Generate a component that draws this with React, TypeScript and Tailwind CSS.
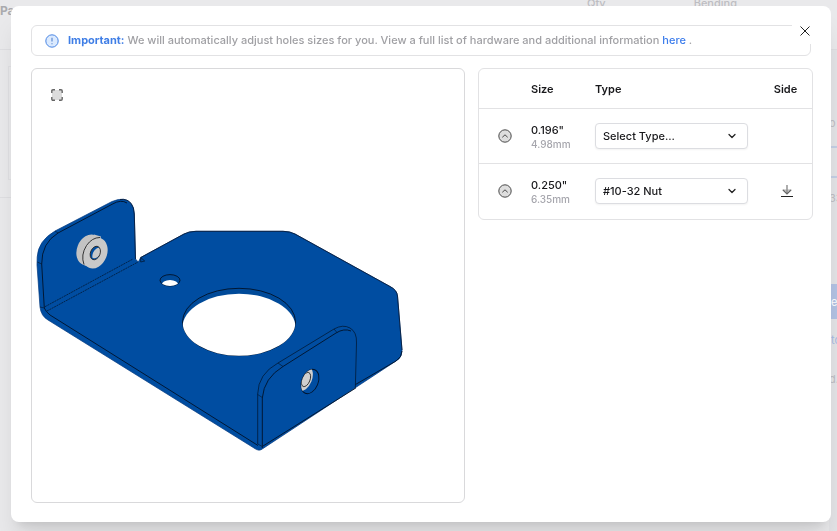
import { useState } from "react";
import { ChevronDown } from "lucide-react";

type HoleRow = {
  id: string;
  inches: string;
  mm: string;
  hardware: string;
  hasSide: boolean;
};

const HOLES: HoleRow[] = [
  { id: "h1", inches: '0.196"', mm: "4.98mm", hardware: "Select Type...", hasSide: false },
  { id: "h2", inches: '0.250"', mm: "6.35mm", hardware: "#10-32 Nut", hasSide: true },
];

function InfoIcon() {
  return (
    <svg viewBox="0 0 14 14" className="size-3.5 shrink-0" fill="none">
      <circle cx="7" cy="7" r="6.2" fill="#dbeafe" stroke="#4a86e4" />
      <path d="M7 3.8v3.8M7 9.3v1" stroke="#6f97d8" strokeWidth="1.4" />
    </svg>
  );
}

function ExpandIcon() {
  return (
    <svg viewBox="0 0 12 12" className="size-3" fill="none">
      <rect x="1" y="1" width="10" height="10" rx="1" fill="#dcdcdc" />
      <path
        d="M.8 4V2Q.8.8 2 .8h2M8 .8h2Q11.2.8 11.2 2v2M11.2 8v2q0 1.2-1.2 1.2H8M4 11.2H2Q.8 11.2.8 10V8"
        stroke="#666"
        strokeWidth="1.4"
      />
    </svg>
  );
}

function CircleUpIcon() {
  return (
    <svg viewBox="0 0 14 14" className="size-3.5" fill="none">
      <circle cx="7" cy="7" r="6.2" fill="#dedede" stroke="#4b4b4b" />
      <path d="M4.3 8.3 7 5.8l2.7 2.5" stroke="#4b4b4b" />
    </svg>
  );
}

function SideIcon() {
  return (
    <svg viewBox="0 0 14 14" className="size-3.5" fill="none">
      <path d="M3 6h8L7 10Z" fill="#d4d4d4" />
      <path d="M7 1v9" stroke="#777" strokeWidth="1.2" />
      <path d="M2.5 6h9" stroke="#999" strokeWidth=".8" />
      <path d="M3 6 7 10l4-4" stroke="#666" strokeWidth="1.2" />
      <path d="M1 12.5h12" stroke="#222" />
    </svg>
  );
}

function BracketModel() {
  return (
    <svg viewBox="32 69 432 433" className="block w-full" fill="none" strokeLinejoin="round">
      <defs>
        <clipPath id="bore">
          <ellipse cx="239" cy="322" rx="56.5" ry="33.7" />
        </clipPath>
        <clipPath id="pilot">
          <ellipse cx="170" cy="280.3" rx="10" ry="5.7" />
        </clipPath>
        <clipPath id="frontHole">
          <ellipse cx="310" cy="381.5" rx="8.2" ry="12.7" transform="rotate(22 310 381.5)" />
        </clipPath>
        <clipPath id="nutBore">
          <ellipse cx="95.3" cy="253" rx="4.8" ry="7" transform="rotate(22 95.3 253)" />
        </clipPath>
      </defs>

      {/* silhouette */}
      <path
        d="M37 265 37.2 257Q38 241 55 231L112 201.5Q125 196 131 203.5Q134 207 134.3 214L135.5 259 138.3 262 140.7 257.5 184 234Q189 231.3 196 231.3H283Q290 231.3 295 234L390 286.5Q397 290 397.5 296L402 350Q402 356 399 359L263 448.5Q259 452 254 448L48 320Q41 316 40 307Z"
        fill="#004da1"
        stroke="#00377c"
        strokeWidth=".7"
      />
      <path
        d="M120 199.5q8-1 11.5 4.5Q134 207 134.3 214L135.5 259M140.7 257.5 184 234Q189 231.3 196 231.3H283Q290 231.3 295 234L390 286.5Q397 290 397.5 296L402 350"
        stroke="#001533"
        strokeWidth=".8"
      />

      <g stroke="#001228" strokeWidth=".9">
        {/* left flange */}
        <path d="M44.3 308 41.7 264Q41.5 243 58 233L112 204.3Q121 199 127 203" />
        <path d="M37.3 262 41.7 264M55 231l3 2M40 307l4.3 1" strokeWidth=".6" />
        <path d="M45 306.7 133 259M47 311 138 262" strokeWidth=".7" strokeDasharray="2 .7" />
        <path d="M44.3 308Q46 312 50 315L258 445.5" />
        <path d="M140.7 257.5v4.5l4-1-4-3.5" strokeWidth=".7" />

        {/* plate edge */}
        <path d="M355.5 384.5 396 361Q402 357 402 351" />
        <path d="M263 446 355 388.5" />

        {/* front flange */}
        <path
          d="M257.7 444V394Q258 374 278 363L334 329Q343 324 350 328Q357 332 356.5 343L355.3 389"
          strokeWidth=".7"
        />
        <path d="M262.3 448V398Q264 378 283 366.5L336 333Q344 328 351 331" />
        <path d="M257.7 394.5l4.6 3M278 363l5 3.5M334 329l3 3.5M257.7 444l4.6 2.5" strokeWidth=".6" />
      </g>

      <ellipse cx="239" cy="322" rx="56.5" ry="33.7" fill="#004a99" stroke="#001228" strokeWidth=".9" />
      <ellipse cx="239" cy="327.5" rx="56.5" ry="33.7" fill="#fff" clipPath="url(#bore)" />
      <ellipse cx="170" cy="280.3" rx="10" ry="5.7" fill="#004a99" stroke="#001228" strokeWidth=".9" />
      <ellipse cx="170" cy="285.5" rx="8.5" ry="5.5" fill="#fff" clipPath="url(#pilot)" />

      {/* press-fit nut */}
      <ellipse cx="89" cy="250" rx="12" ry="16" transform="rotate(22 89 250)" fill="#c3c3c3" />
      <path d="M94 234.5 101 236.5 92 268 84 265Z" fill="#c3c3c3" />
      <ellipse cx="95" cy="253" rx="12" ry="16" transform="rotate(22 95 253)" fill="#c9c9c9" />
      <path d="M84 264.5Q80.5 255 86.5 245.5Q92 237.5 100 237.5" stroke="#222" strokeWidth=".9" />
      <ellipse cx="95.3" cy="253" rx="4.8" ry="7" transform="rotate(22 95.3 253)" fill="#004da1" />
      <ellipse
        cx="97.5"
        cy="254.5"
        rx="4.8"
        ry="7"
        transform="rotate(22 97.5 254.5)"
        fill="#c9c9c9"
        clipPath="url(#nutBore)"
      />
      <ellipse
        cx="95.3"
        cy="253"
        rx="4.8"
        ry="7"
        transform="rotate(22 95.3 253)"
        stroke="#222"
        strokeWidth=".8"
      />

      {/* nut seen through the front flange */}
      <ellipse
        cx="310"
        cy="381.5"
        rx="8.2"
        ry="12.7"
        transform="rotate(22 310 381.5)"
        fill="#004da1"
        stroke="#001228"
        strokeWidth=".9"
      />
      <g clipPath="url(#frontHole)">
        <ellipse cx="304" cy="378.5" rx="8" ry="13" transform="rotate(22 304 378.5)" fill="#cfcfcf" />
        <ellipse
          cx="306"
          cy="379.5"
          rx="4"
          ry="7.5"
          transform="rotate(22 306 379.5)"
          stroke="#222"
          strokeWidth=".8"
        />
      </g>
    </svg>
  );
}

function HardwareSelect({ hole }: { hole: HoleRow }) {
  const [value, setValue] = useState(hole.hardware);
  return (
    <div className="relative w-[153px]">
      <select
        aria-label={`Hardware type for ${hole.inches} hole`}
        value={value}
        onChange={(e) => setValue(e.target.value)}
        className="block h-[26px] w-full appearance-none rounded border border-[#dcdde1] bg-white pr-7 pl-[7px] text-[11px] font-medium text-[#18181b] shadow-xs"
      >
        <option>{hole.hardware}</option>
      </select>
      <ChevronDown
        className="pointer-events-none absolute top-[7px] right-2.5 size-3 text-[#222]"
        strokeWidth={2.5}
      />
    </div>
  );
}

function HoleTable() {
  return (
    <div className="w-[335px] shrink-0 rounded-md border border-[#e2e2e4]">
      <table className="w-full table-fixed text-left text-[11px] leading-[14px] font-medium text-[#18181b]">
        <thead>
          <tr className="h-[39px] border-b border-[#e2e2e4]">
            <th className="w-[52px]" />
            <th className="w-16 pt-0.5 font-semibold">Size</th>
            <th className="pt-0.5 font-semibold">Type</th>
            <th className="w-[50px] pt-0.5 pr-[3px] text-center font-semibold">Side</th>
          </tr>
        </thead>
        <tbody>
          {HOLES.map((hole) => (
            <tr key={hole.id} className="h-[55px] border-b border-[#e2e2e4] last:h-14 last:border-b-0">
              <td>
                <button aria-label="Locate hole" className="mx-auto block size-3.5">
                  <CircleUpIcon />
                </button>
              </td>
              <td className="pt-0.5">
                <div>{hole.inches}</div>
                <div className="text-[10px] text-[#a6a6ad]">{hole.mm}</div>
              </td>
              <td>
                <HardwareSelect hole={hole} />
              </td>
              <td>
                {hole.hasSide && (
                  <button aria-label="Flip side" className="mx-auto block size-3.5">
                    <SideIcon />
                  </button>
                )}
              </td>
            </tr>
          ))}
        </tbody>
      </table>
    </div>
  );
}

function PageBehind() {
  return (
    <div className="flex h-screen flex-col overflow-hidden bg-[#e9e9eb] text-[#bdbdc2]">
      <div className="flex h-[50px] shrink-0 items-start justify-between border-b border-[#dedee1]">
        <div className="pt-[3px] text-xs leading-4 font-bold text-[#aaaaae]">Pa</div>
        <div className="-mt-1 flex gap-[88px] pr-[100px] text-[11px] leading-[14px] font-medium">
          <span>Qty</span>
          <span>Bending</span>
        </div>
      </div>
      <div className="flex flex-1 justify-between">
        <div className="w-3">
          <div className="h-[148px] border-b border-[#dedee1] pt-4">
            <div className="ml-2 h-[114px] border border-[#e0e0e3]" />
          </div>
        </div>
        <div className="w-2 bg-[#e3e3e6] pt-[66px] text-[11px] leading-[14px]">
          <div>o</div>
          <div className="mt-4 h-8 border-y-2 border-[#c3cee4]" />
          <div className="mt-[13px]">33</div>
          <div className="mt-[79px] flex h-[35px] items-center bg-[#b3c2e3] pl-0.5 text-white">e</div>
          <div className="mt-[14px] pl-0.5 text-[#a7bae2]">to</div>
          <div className="mt-[25px]">d.</div>
        </div>
      </div>
    </div>
  );
}

export default function App() {
  return (
    <div className="font-[Inter,sans-serif]">
      <PageBehind />
      <div className="fixed inset-0 overflow-hidden pt-1.5 pr-1.5 pl-[11px]">
        <div
          role="dialog"
          aria-label="Hardware"
          className="relative rounded-lg bg-white pt-[19px] pr-[18px] pb-[19px] pl-5 shadow-xl"
        >
          <div className="mr-0.5 flex h-[31px] items-center gap-[9px] rounded-md border border-[#e2e2e4] px-[13px] text-[11px] font-medium text-[#a0a0a4]">
            <InfoIcon />
            <p>
              <strong className="font-bold text-[#3f7ee6]">Important:</strong> We will automatically
              adjust holes sizes for you. View a full list of hardware and additional information{" "}
              <a href="#hardware" className="text-[#3b7cec]">
                here
              </a>{" "}
              .
            </p>
          </div>

          <button
            aria-label="Close"
            className="absolute top-3 right-[13px] flex size-[26px] items-center justify-center bg-white"
          >
            <svg viewBox="0 0 10 10" className="size-2.5" stroke="#222">
              <path d="M.5.5l9 9M9.5.5l-9 9" />
            </svg>
          </button>

          <div className="mt-3 flex items-start gap-[13px]">
            <div className="relative min-w-0 flex-1 rounded-md border border-[#d9d9db]">
              <BracketModel />
              <button aria-label="Fit to view" className="absolute top-5 left-[19px]">
                <ExpandIcon />
              </button>
            </div>
            <HoleTable />
          </div>
        </div>
      </div>
    </div>
  );
}
